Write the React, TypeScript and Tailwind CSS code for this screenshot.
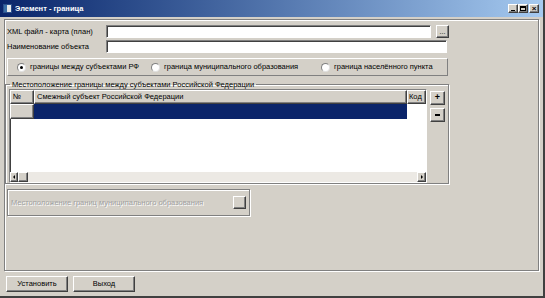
const raised =
  'border border-t-white border-l-white border-r-[#404040] border-b-[#404040] shadow-[inset_-1px_-1px_0_#808080] bg-[#d4d0c8]';
const sunken =
  'border border-t-[#808080] border-l-[#808080] border-r-white border-b-white shadow-[inset_1px_1px_0_#404040]';

function Radio({ label, checked }: { label: string; checked?: boolean }) {
  return (
    <div className="flex items-center gap-[4px]">
      <div className="w-[9px] h-[9px] rounded-full bg-white border border-t-[#808080] border-l-[#808080] border-r-[#e0e0e0] border-b-[#e0e0e0] flex items-center justify-center">
        {checked && <div className="w-[3px] h-[3px] rounded-full bg-black" />}
      </div>
      <span>{label}</span>
    </div>
  );
}

function WinButton({ children }: { children: React.ReactNode }) {
  return (
    <div className={`w-[10px] h-[9px] ${raised} flex items-center justify-center`}>{children}</div>
  );
}

export default function App() {
  return (
    <div className="w-[545px] h-[298px] bg-[#d4d0c8] flex flex-col font-['Liberation_Sans',sans-serif] text-[7.5px] leading-none text-black border-r-[2px] border-b-[2px] border-[#404040] overflow-hidden">
      {/* заголовок окна */}
      <div className="h-[17px] shrink-0 flex items-center bg-gradient-to-r from-[#0a246a] to-[#a6caf0] pl-[3px] pr-[3px]">
        <div className="w-[9px] h-[9px] bg-[#e8e8e8] border border-[#2c4f8c] flex">
          <div className="w-[3px] h-full bg-[#3a6ea5]" />
        </div>
        <span className="ml-[3px] text-white font-bold text-[7.5px]">Элемент - граница</span>
        <div className="ml-auto flex mr-[1px]">
          <WinButton>
            <div className="w-[4px] h-[1px] bg-black mt-[4px]" />
          </WinButton>
          <WinButton>
            <div className="w-[6px] h-[5px] border border-black border-t-2" />
          </WinButton>
          <div className="ml-[1px]">
            <WinButton>
              <span className="font-bold text-[8px] leading-none">×</span>
            </WinButton>
          </div>
        </div>
      </div>

      {/* основная панель */}
      <div className="mx-[4px] mt-[2px] h-[252px] shrink-0 border border-[#808080] shadow-[1px_1px_0_white,inset_1px_1px_0_white] flex flex-col">
        {/* XML файл */}
        <div className="flex items-center mt-[5px] h-[13px]">
          <span className="w-[101px] pl-[2px]">XML файл -  карта (план)</span>
          <div className={`w-[325px] h-[13px] bg-white ${sunken}`} />
          <div className={`ml-[5px] w-[13px] h-[13px] ${raised} flex items-end justify-center pb-[2px] text-[7px]`}>...</div>
        </div>
        {/* наименование */}
        <div className="flex items-center mt-[2px] h-[13px]">
          <span className="w-[101px] pl-[2px]">Наименование объекта</span>
          <div className={`w-[341px] h-[13px] bg-white ${sunken}`} />
        </div>

        {/* переключатели */}
        <div className="ml-[2px] mt-[5px] w-[441px] h-[18px] border border-t-white border-l-white border-r-[#808080] border-b-[#808080] flex items-center pl-[9px]">
          <div className="w-[134px]">
            <Radio label="границы между субъектами РФ" checked />
          </div>
          <div className="w-[170px]">
            <Radio label="граница муниципального образования" />
          </div>
          <Radio label="граница населённого пункта" />
        </div>

        {/* группа с таблицей */}
        <fieldset className="mt-[5px] w-[443px] h-[103px] border border-[#808080] shadow-[1px_1px_0_white,inset_1px_1px_0_white] px-[3px] pt-0 pb-[1px] flex">
          <legend className="ml-[1px] px-[2px]">Местоположение границы между субъектами Российской Федерации</legend>
          <div className="flex w-full">
            <div className={`w-[418px] h-[94px] bg-white ${sunken} flex flex-col`}>
              <div className="flex h-[14px]">
                <div className={`w-[24px] ${raised} pl-[2px] flex items-center`}>№</div>
                <div className={`w-[373px] ${raised} pl-[2px] flex items-center`}>Смежный субъект Российской Федерации</div>
                <div className={`w-[19px] ${raised} pl-[1px] flex items-center`}>Код</div>
              </div>
              <div className="flex h-[15px]">
                <div className={`w-[24px] ${raised}`} />
                <div className="w-[373px] bg-[#0a246a]" />
              </div>
              <div className="flex-1" />
              <div className="flex h-[10px] bg-[#ece9e4]">
                <div className={`w-[8px] ${raised} flex items-center justify-center`}>
                  <div className="w-0 h-0 border-y-[2px] border-y-transparent border-r-[2px] border-r-black" />
                </div>
                <div className={`w-[10px] ${raised}`} />
                <div className="flex-1" />
                <div className={`w-[9px] ${raised} flex items-center justify-center`}>
                  <div className="w-0 h-0 border-y-[2px] border-y-transparent border-l-[2px] border-l-black" />
                </div>
              </div>
            </div>
            <div className="ml-[3px] flex flex-col mt-[2px] gap-[3px]">
              <div className={`w-[15px] h-[14px] ${raised} flex items-center justify-center font-bold text-[9px]`}>+</div>
              <div className={`w-[15px] h-[14px] ${raised} flex items-center justify-center`}>
                <div className="w-[5px] h-[2px] bg-black" />
              </div>
            </div>
          </div>
        </fieldset>

        {/* отключённая группа */}
        <div className="ml-[2px] mt-[5px] w-[243px] h-[27px] border border-[#808080] shadow-[1px_1px_0_white,inset_1px_1px_0_white] flex items-center pl-[3px] pr-[3px]">
          <span className="text-[#a0a0a0] [text-shadow:1px_1px_0_white]">Местоположение границ муниципального образования</span>
          <div className={`ml-auto w-[13px] h-[13px] ${raised}`} />
        </div>
      </div>

      {/* кнопки */}
      <div className="flex gap-[5px] ml-[6px] mt-[5px]">
        <div className={`w-[62px] h-[16px] ${raised} flex items-center justify-center`}>Установить</div>
        <div className={`w-[62px] h-[16px] ${raised} flex items-center justify-center`}>Выход</div>
      </div>
    </div>
  );
}
